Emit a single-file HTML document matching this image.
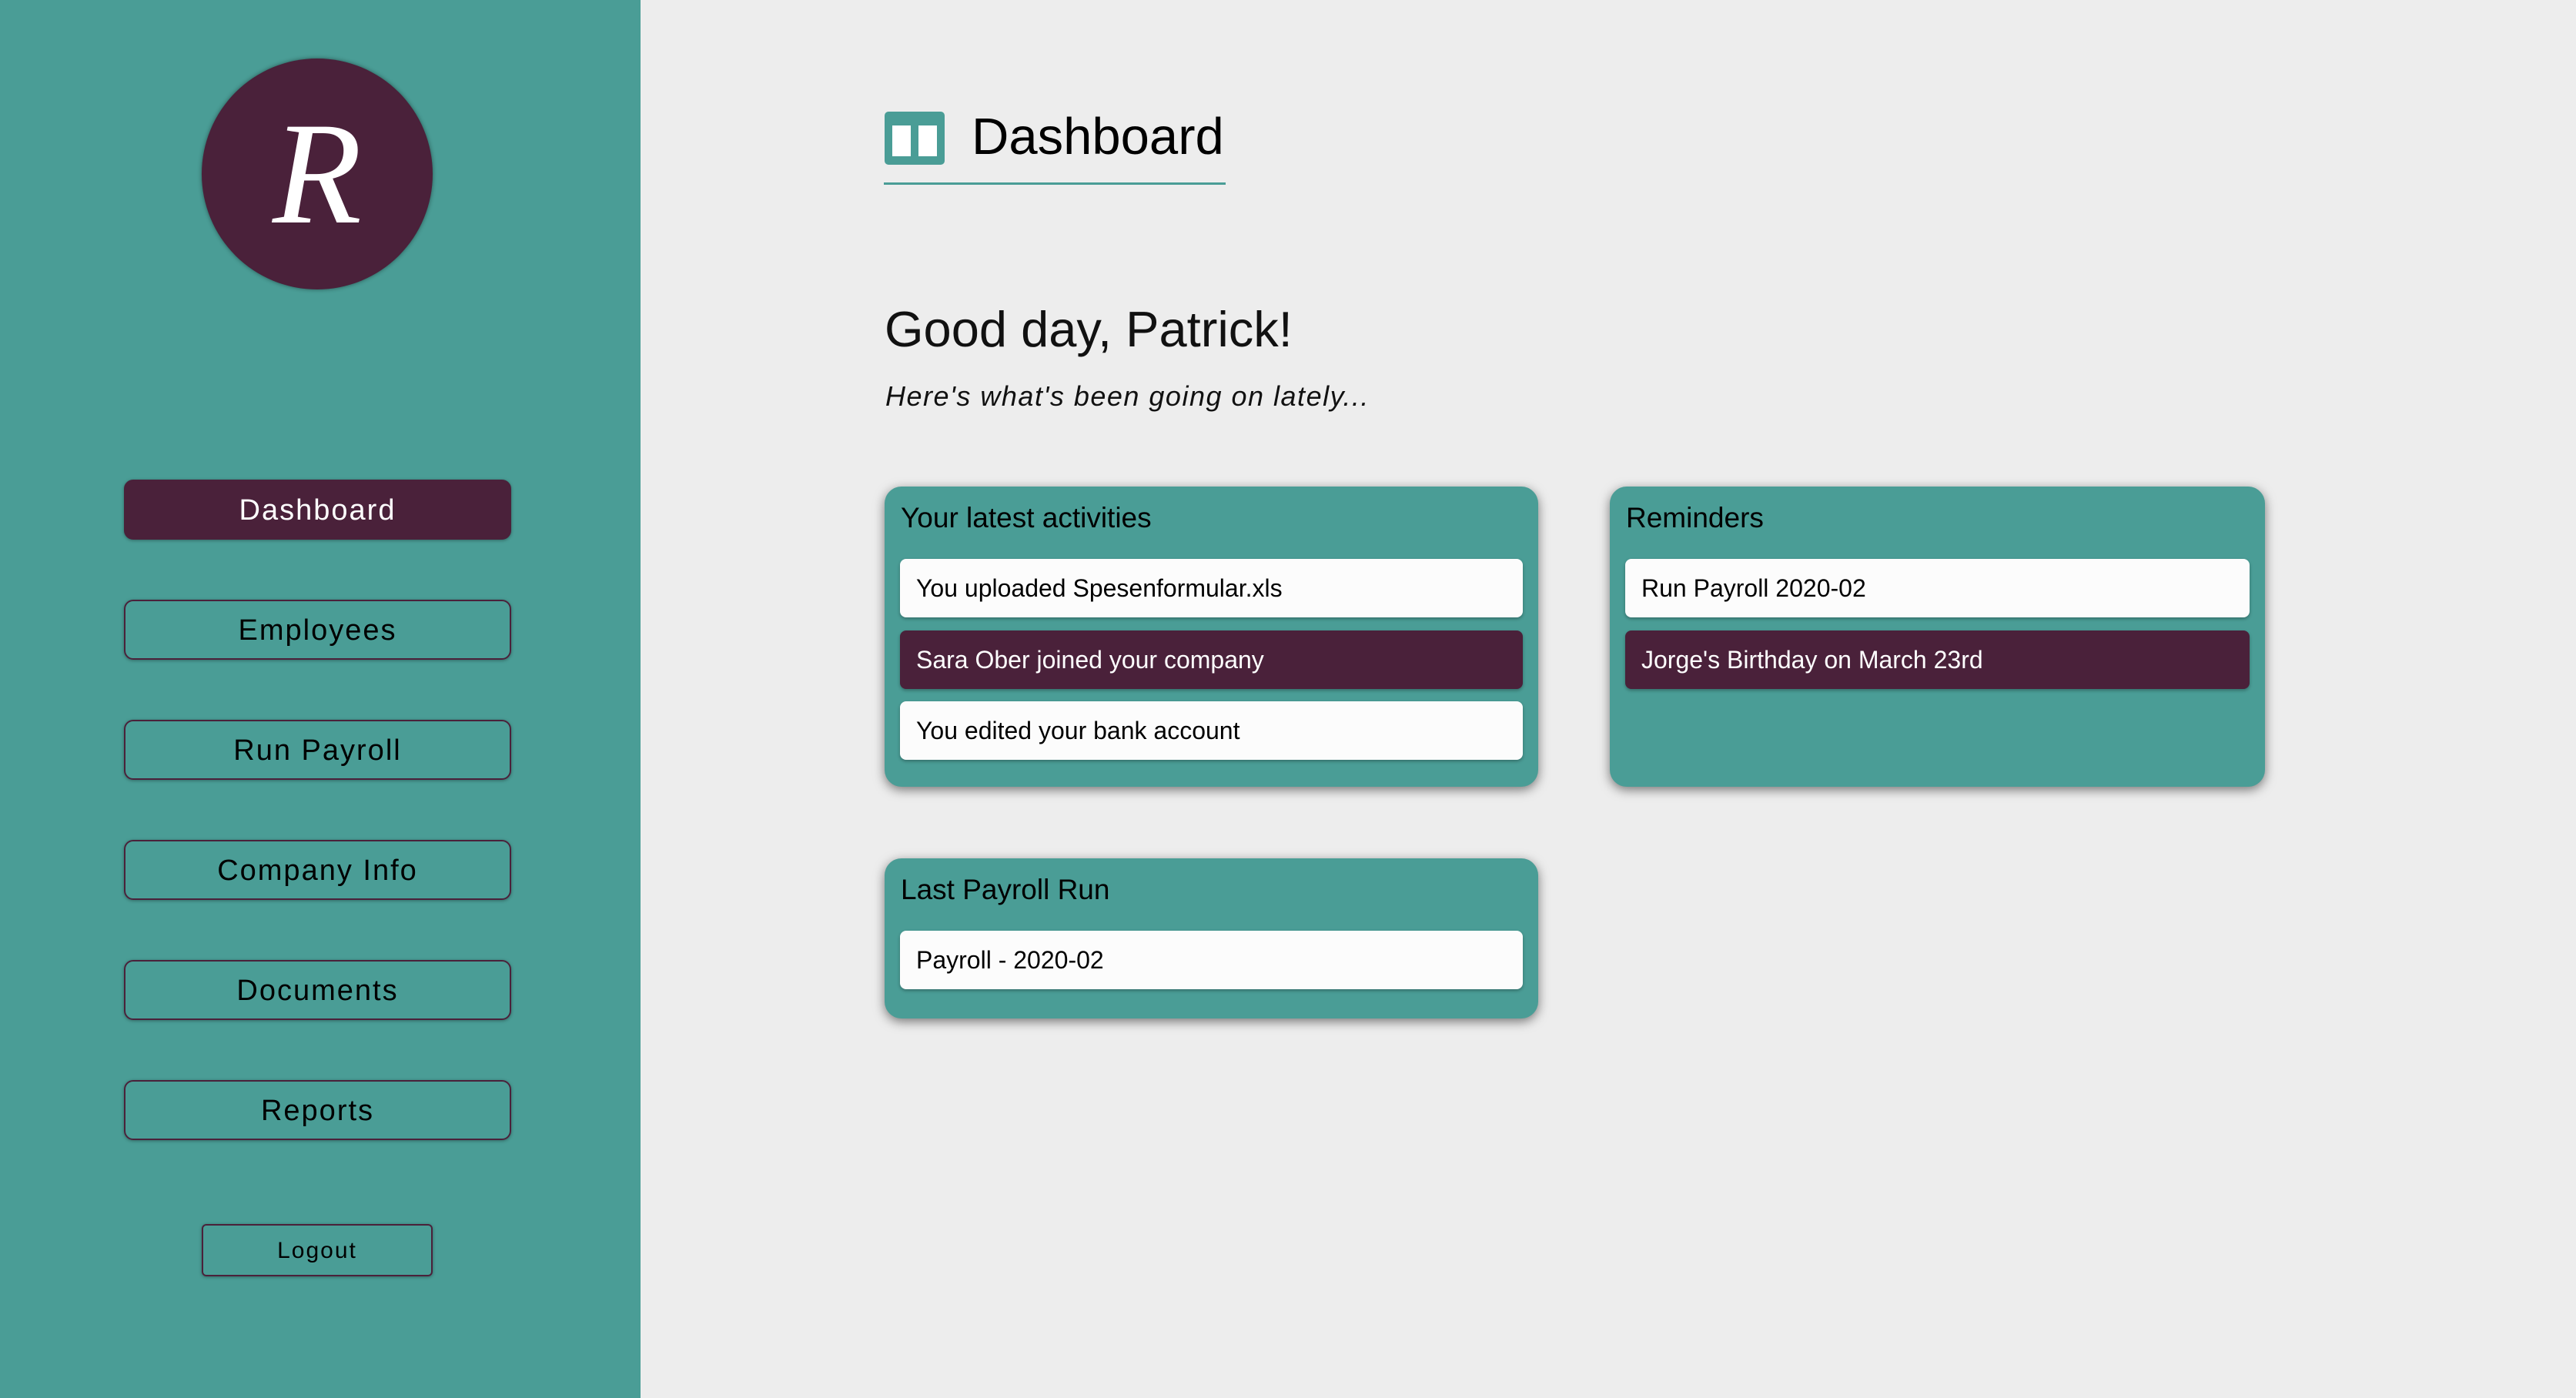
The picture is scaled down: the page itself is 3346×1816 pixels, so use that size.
<!DOCTYPE html>
<html><head><style>
*{margin:0;padding:0;box-sizing:border-box}
body{width:3346px;height:1816px;background:#ededed;font-family:"Liberation Sans",sans-serif;position:relative;overflow:hidden}
.side{position:absolute;left:0;top:0;width:832px;height:1816px;background:#4a9d96}
.logo{position:absolute;left:262px;top:76px;width:300px;height:300px;border-radius:50%;background:#4a213a;box-shadow:0 0 6px rgba(0,0,0,.45);color:#fff;font-family:"Liberation Serif",serif;font-style:italic;font-size:190px;text-align:center;line-height:300px}
.btn{position:absolute;left:161px;width:503px;height:78px;border:2px solid #4a213a;border-radius:12px;font-size:38px;letter-spacing:2px;text-align:center;line-height:76px;color:#000;box-shadow:0 1px 4px rgba(0,0,0,.35)}
.btn.act{background:#4a213a;color:#fff}
.logout{position:absolute;left:262px;top:1590px;width:300px;height:68px;border:2px solid #4a213a;border-radius:6px;font-size:30px;letter-spacing:2px;text-align:center;line-height:66px;box-shadow:0 1px 4px rgba(0,0,0,.35)}
.title{position:absolute;left:1262px;top:138px;font-size:67px;line-height:80px;color:#000}
.icon{position:absolute;left:1149px;top:145px;width:78px;height:69px;background:#4a9d96;border-radius:5px}
.icon i{position:absolute;top:18px;width:24px;height:40px;background:#fff}
.uline{position:absolute;left:1148px;top:237px;width:444px;height:3px;background:#4a9d96}
.greet{position:absolute;left:1149px;top:388px;font-size:65px;line-height:80px;color:#111}
.sub{position:absolute;left:1150px;top:494px;font-size:36px;font-style:italic;color:#111;letter-spacing:1.5px}
.card{position:absolute;background:#4a9d96;border-radius:22px;box-shadow:0 4px 14px rgba(0,0,0,.5)}
.card h3{position:absolute;left:21px;top:20px;font-size:37px;font-weight:normal;color:#000}
.item{position:absolute;left:20px;right:20px;height:76px;background:#fcfcfc;border-radius:8px;font-size:32px;line-height:76px;padding-left:21px;color:#000;box-shadow:0 2px 4px rgba(0,0,0,.3)}
.item.p{background:#4a213a;color:#fff}
</style></head><body>
<div class="side">
<div class="logo">R</div>
<div class="btn act" style="top:623px">Dashboard</div>
<div class="btn" style="top:779px">Employees</div>
<div class="btn" style="top:935px">Run Payroll</div>
<div class="btn" style="top:1091px">Company Info</div>
<div class="btn" style="top:1247px">Documents</div>
<div class="btn" style="top:1403px">Reports</div>
<div class="logout">Logout</div>
</div>
<div class="icon"><i style="left:10px"></i><i style="left:44px"></i></div>
<div class="title">Dashboard</div>
<div class="uline"></div>
<div class="greet">Good day, Patrick!</div>
<div class="sub">Here's what's been going on lately...</div>
<div class="card" style="left:1149px;top:632px;width:849px;height:390px">
<h3>Your latest activities</h3>
<div class="item" style="top:94px">You uploaded Spesenformular.xls</div>
<div class="item p" style="top:187px">Sara Ober joined your company</div>
<div class="item" style="top:279px">You edited your bank account</div>
</div>
<div class="card" style="left:2091px;top:632px;width:851px;height:390px">
<h3>Reminders</h3>
<div class="item" style="top:94px">Run Payroll 2020-02</div>
<div class="item p" style="top:187px">Jorge's Birthday on March 23rd</div>
</div>
<div class="card" style="left:1149px;top:1115px;width:849px;height:208px">
<h3>Last Payroll Run</h3>
<div class="item" style="top:94px">Payroll - 2020-02</div>
</div>
</body></html>
